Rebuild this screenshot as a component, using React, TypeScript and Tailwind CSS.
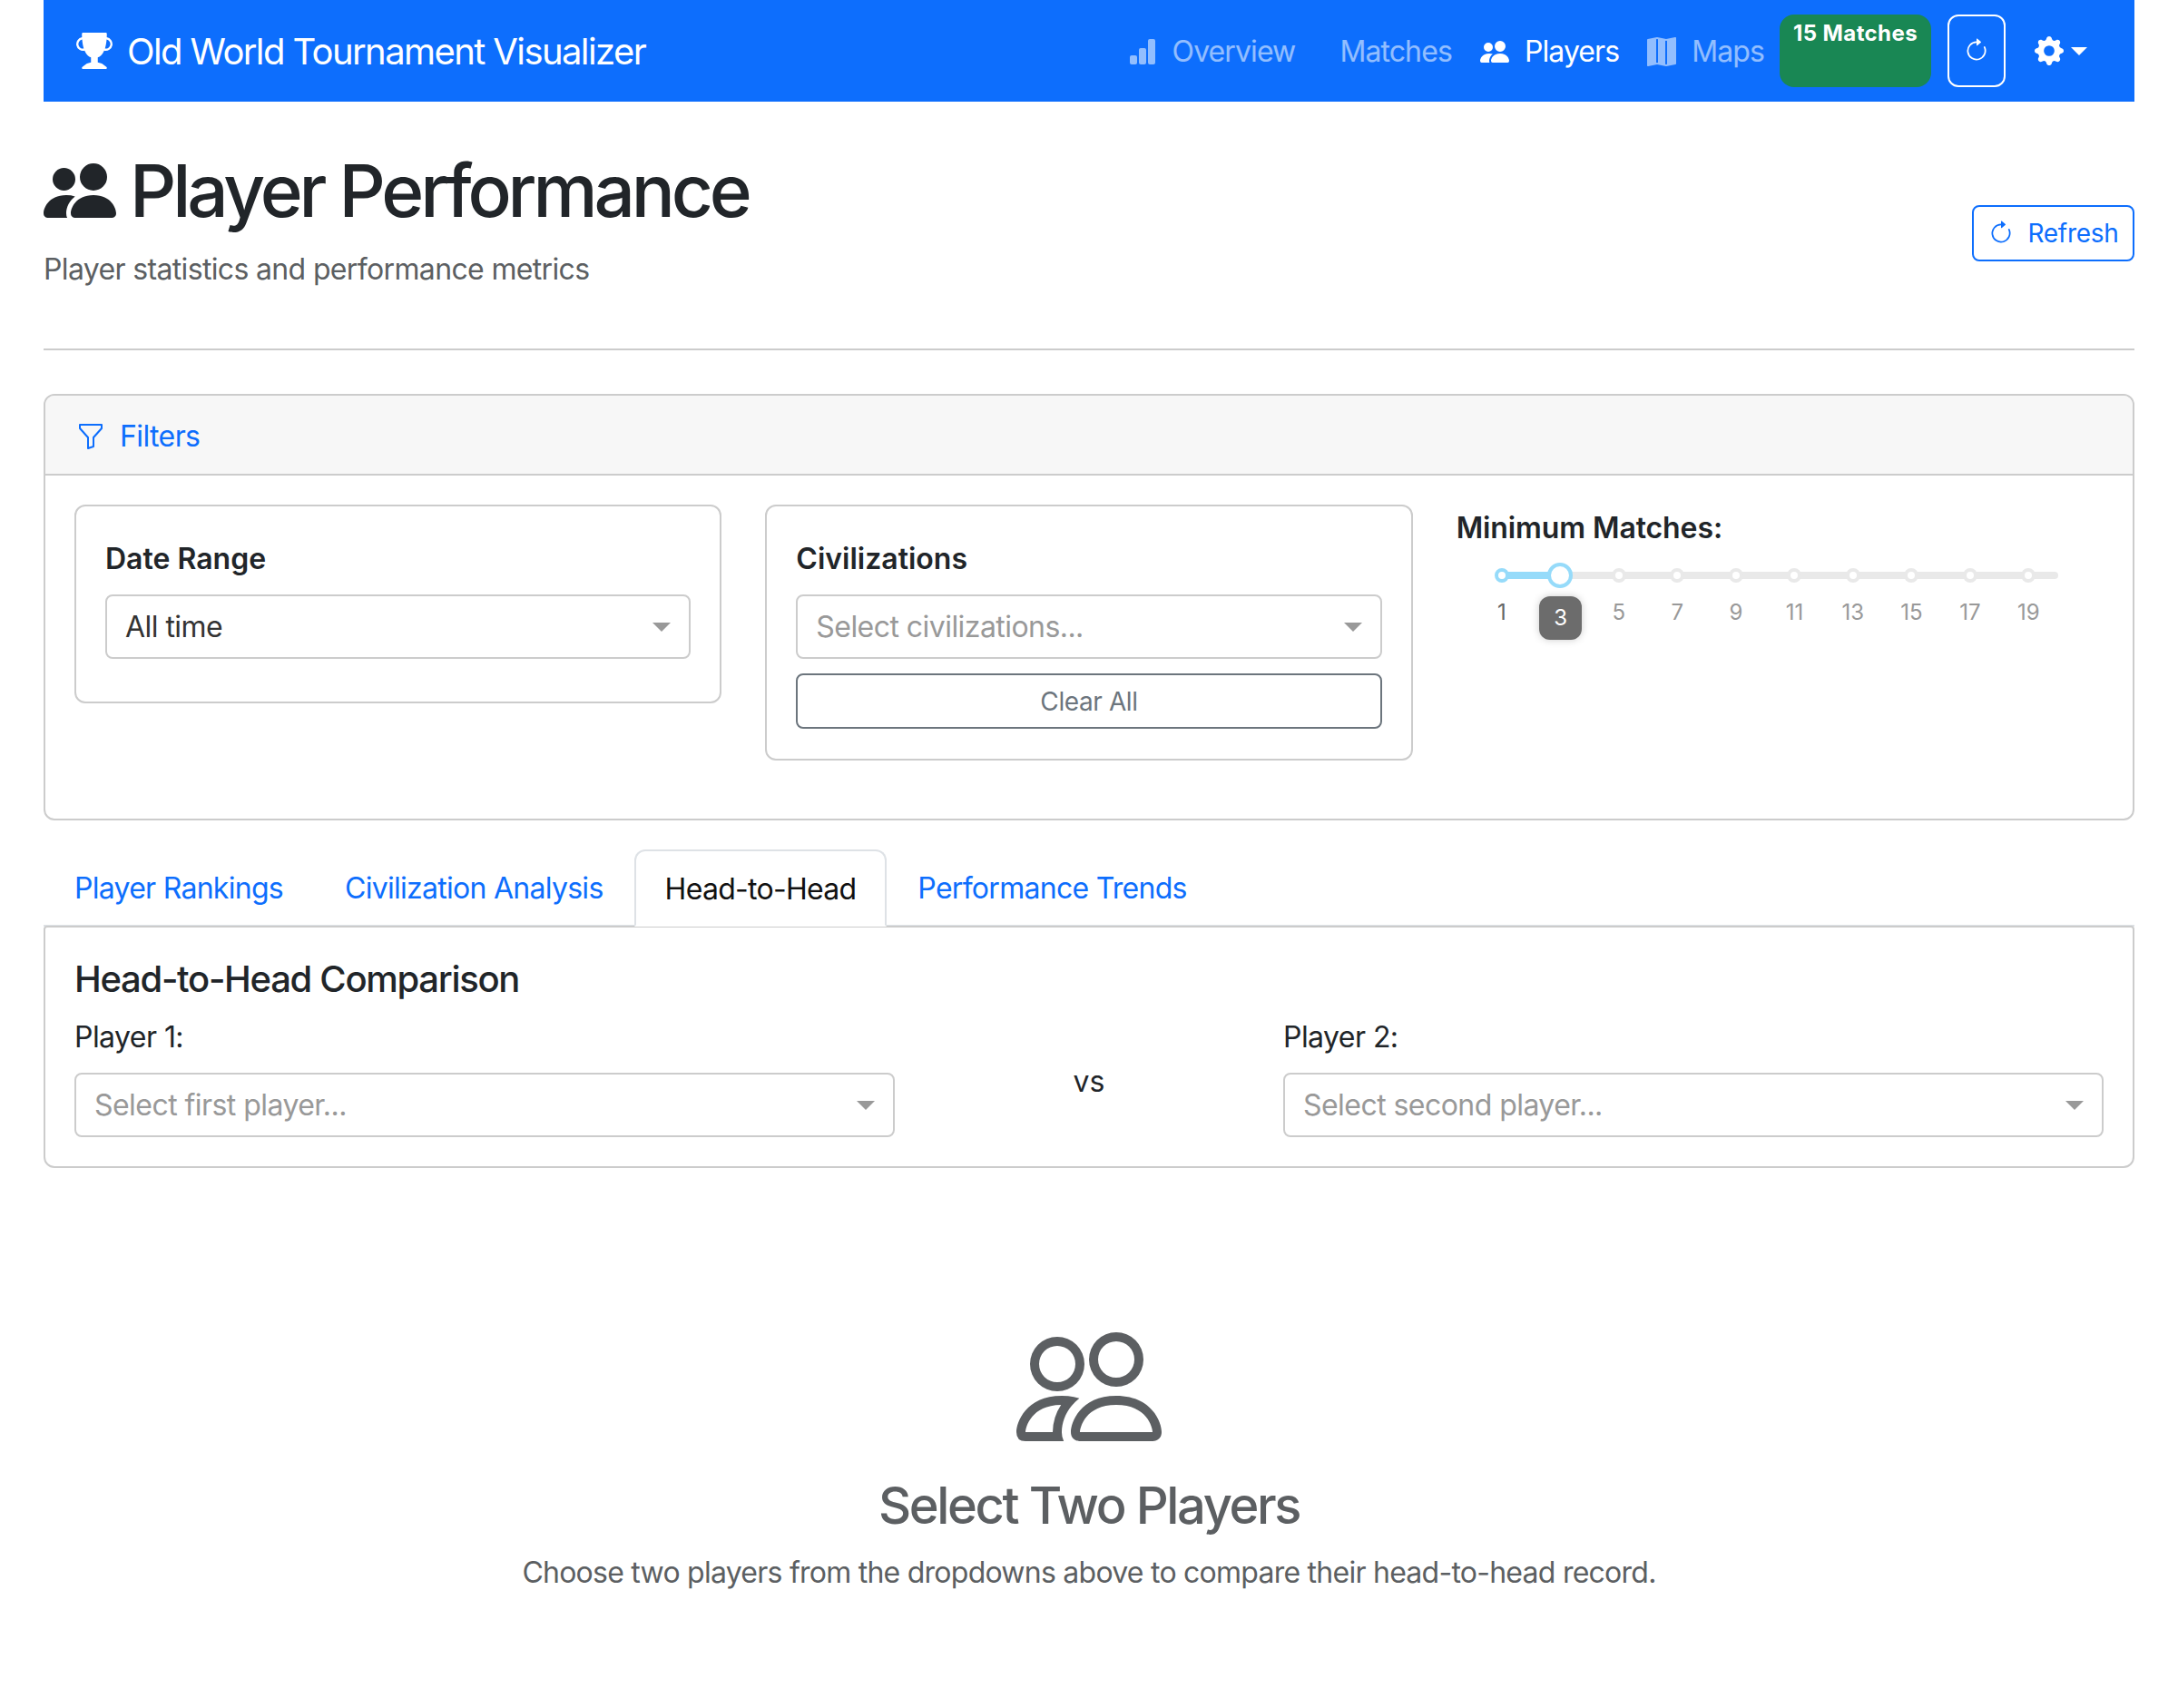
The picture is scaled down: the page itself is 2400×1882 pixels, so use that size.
import React from "react";
import {
  BsArrowClockwise,
  BsBarChartFill,
  BsFunnel,
  BsGearFill,
  BsMapFill,
  BsPeople,
  BsPeopleFill,
  BsTrophyFill,
} from "react-icons/bs";

const marks = [1, 3, 5, 7, 9, 11, 13, 15, 17, 19];

function Caret() {
  return <span className="h-0 w-0 border-x-[10px] border-t-[10px] border-x-transparent border-t-[#999]" />;
}

function Select({ text, muted }: { text: string; muted?: boolean }) {
  return (
    <div className="flex h-[71px] items-center justify-between rounded-[8px] border-2 border-[#ccc] bg-white pl-[20px] pr-[20px]">
      <span className={`text-[32px] tracking-[-0.55px] ${muted ? "text-[#999]" : "text-[#333]"}`}>{text}</span>
      <Caret />
    </div>
  );
}

function NavLink({
  icon,
  label,
  active,
  className,
}: {
  icon?: React.ReactNode;
  label: string;
  active?: boolean;
  className?: string;
}) {
  return (
    <a className={`flex items-center gap-[17px] pt-[2px] text-[32px] tracking-[-0.9px] ${active ? "text-white" : "text-white/55"} ${className ?? ""}`}>
      {icon}
      {label}
    </a>
  );
}

function MinMatches() {
  return (
    <div className="pt-[2px]">
      <div className="text-[32px] font-semibold leading-[48px] tracking-[-0.1px] text-[#212529]">Minimum Matches:</div>
      <div className="relative ml-[18px] mt-[8px] h-[80px] w-[645px]">
        <div className="absolute left-[26px] top-[16px] h-[8px] w-[619px] rounded-full bg-[#e9e9e9]" />
        <div className="absolute left-[26px] top-[16px] h-[8px] w-[72px] rounded-full bg-[#96dbfa]" />
        <div className="flex">
          {marks.map((m, i) => (
            <div key={m} className="relative flex w-[64.5px] flex-col items-center">
              <span
                className={`relative mt-[12px] h-[16px] w-[16px] rounded-full border-[4px] bg-white ${i === 0 ? "border-[#96dbfa]" : "border-[#e9e9e9]"}`}
              />
              {i === 1 ? (
                <>
                  <span className="absolute left-[18px] top-[6px] h-[28px] w-[28px] rounded-full border-[4px] border-[#96dbfa] bg-white" />
                  <span className="absolute left-[9px] top-[43px] flex h-[48px] w-[47px] items-center justify-center rounded-[12px] bg-[#6c6c6c] text-[24px] text-white shadow-[0_0_8px_#ccc]">
                    {m}
                  </span>
                </>
              ) : (
                <span className={`mt-[18px] text-[24px] leading-[30px] ${i === 0 ? "text-[#666]" : "text-[#999]"}`}>{m}</span>
              )}
            </div>
          ))}
        </div>
      </div>
    </div>
  );
}

export default function App() {
  return (
    <div className="min-h-[1882px] bg-white px-[48px] font-['Inter',sans-serif] text-[#212529]">
      <nav className="flex h-[112px] items-center bg-[#0d6efd] pl-[36px] pr-[52px] text-white">
        <BsTrophyFill className="h-[40px] w-[40px]" />
        <span className="ml-[16px] pt-[2px] text-[40px] tracking-[-1.6px]">Old World Tournament Visualizer</span>
        <div className="ml-auto flex items-center">
          <NavLink icon={<BsBarChartFill className="h-[32px] w-[32px]" />} label="Overview" className="mr-[49px]" />
          <NavLink label="Matches" className="mr-[31px]" />
          <NavLink icon={<BsPeopleFill className="h-[32px] w-[32px]" />} label="Players" active className="mr-[31px]" />
          <NavLink icon={<BsMapFill className="h-[32px] w-[32px]" />} label="Maps" className="mr-[17px]" />
          <div className="flex h-[80px] w-[167px] justify-center rounded-[16px] bg-[#198754] pt-[1px] text-[24px] font-bold leading-[40px] tracking-[0.4px]">
            15 Matches
          </div>
          <button className="ml-[18px] flex h-[80px] w-[64px] items-center justify-center rounded-[12px] border-2 border-white">
            <BsArrowClockwise className="h-[28px] w-[28px]" />
          </button>
          <div className="ml-[32px] flex items-center gap-[8px]">
            <BsGearFill className="h-[32px] w-[32px]" />
            <span className="h-0 w-0 border-x-[9px] border-t-[9px] border-x-transparent border-t-white" />
          </div>
        </div>
      </nav>

      <header className="flex h-[274px] items-center justify-between border-b-2 border-[#ccc] pb-[2px]">
        <div className="pb-[12px]">
          <h1 className="flex items-center gap-[15px] text-[80px] font-medium leading-[96px] tracking-[-4.12px]">
            <BsPeopleFill className="h-[80px] w-[80px]" />
            Player Performance
          </h1>
          <p className="mt-[15px] text-[32px] leading-[48px] tracking-[-0.65px] text-[#5c5f62]">
            Player statistics and performance metrics
          </p>
        </div>
        <button className="mt-[20px] flex h-[62px] w-[179px] items-center justify-center gap-[16px] rounded-[8px] border-2 border-[#0d6efd] text-[28px] tracking-[-0.3px] text-[#0d6efd]">
          <BsArrowClockwise className="h-[28px] w-[28px]" />
          Refresh
        </button>
      </header>

      <section className="mt-[48px] rounded-[12px] border-2 border-[#ccc]">
        <div className="flex h-[88px] items-center gap-[16px] rounded-t-[10px] border-b-2 border-[#ccc] bg-[#f7f7f7] pl-[34px] pt-[3px]">
          <BsFunnel className="h-[32px] w-[32px] text-[#0d6efd]" />
          <span className="text-[32px] tracking-[-0.6px] text-[#0d6efd]">Filters</span>
        </div>
        <div className="grid grid-cols-3 items-start gap-[48px] px-[32px] pb-[64px] pt-[32px]">
          <div className="rounded-[12px] border-2 border-[#ccc] px-[32px] pb-[47px] pt-[34px]">
            <div className="mb-[15px] text-[32px] font-semibold leading-[48px]">Date Range</div>
            <Select text="All time" />
          </div>
          <div className="rounded-[12px] border-2 border-[#ccc] px-[32px] pb-[33px] pt-[34px]">
            <div className="mb-[15px] text-[32px] font-semibold leading-[48px]">Civilizations</div>
            <Select text="Select civilizations..." muted />
            <button className="mt-[16px] h-[61px] w-full rounded-[8px] border-2 border-[#6c757d] text-[28px] tracking-[-0.4px] text-[#6c757d]">
              Clear All
            </button>
          </div>
          <MinMatches />
        </div>
      </section>

      <div className="mt-[34px] flex h-[83px] items-end border-b-2 border-[#dee2e6] text-[32px] tracking-[-0.72px]">
        <a className="flex h-[83px] items-center px-[34px] pt-[3px] text-[#0d6efd]">Player Rankings</a>
        <a className="flex h-[83px] items-center px-[34px] pt-[3px] text-[#0d6efd]">Civilization Analysis</a>
        <a className="mb-[-2px] flex h-[85px] items-center rounded-t-[12px] border-2 border-[#dee2e6] border-b-white bg-white px-[32px] pt-[3px] text-[#111]">
          Head-to-Head
        </a>
        <a className="flex h-[83px] items-center px-[34px] pt-[3px] text-[#0d6efd]">Performance Trends</a>
      </div>

      <section className="mt-[-1px] rounded-b-[12px] rounded-t-[4px] border-2 border-[#ccc] px-[32px] pb-[32px] pt-[33px]">
        <h5 className="text-[40px] font-medium leading-[48px] tracking-[-1.3px]">Head-to-Head Comparison</h5>
        <div className="mt-[16px] grid grid-cols-[904px_1fr_904px] items-start">
          <div>
            <label className="block text-[32px] leading-[48px] tracking-[-0.55px]">Player 1:</label>
            <div className="mt-[15px]">
              <Select text="Select first player..." muted />
            </div>
          </div>
          <div className="pt-[49px] text-center text-[32px] leading-[48px]">vs</div>
          <div>
            <label className="block text-[32px] leading-[48px] tracking-[-0.55px]">Player 2:</label>
            <div className="mt-[15px]">
              <Select text="Select second player..." muted />
            </div>
          </div>
        </div>
      </section>

      <div className="flex flex-col items-center pt-[161px] text-[#5c5f62]">
        <BsPeople className="h-[160px] w-[160px]" />
        <h3 className="mt-[17px] text-[56px] font-medium leading-[68px] tracking-[-2.35px]">Select Two Players</h3>
        <p className="mt-[16px] text-[32px] leading-[48px] tracking-[-0.75px]">
          Choose two players from the dropdowns above to compare their head-to-head record.
        </p>
      </div>
    </div>
  );
}
